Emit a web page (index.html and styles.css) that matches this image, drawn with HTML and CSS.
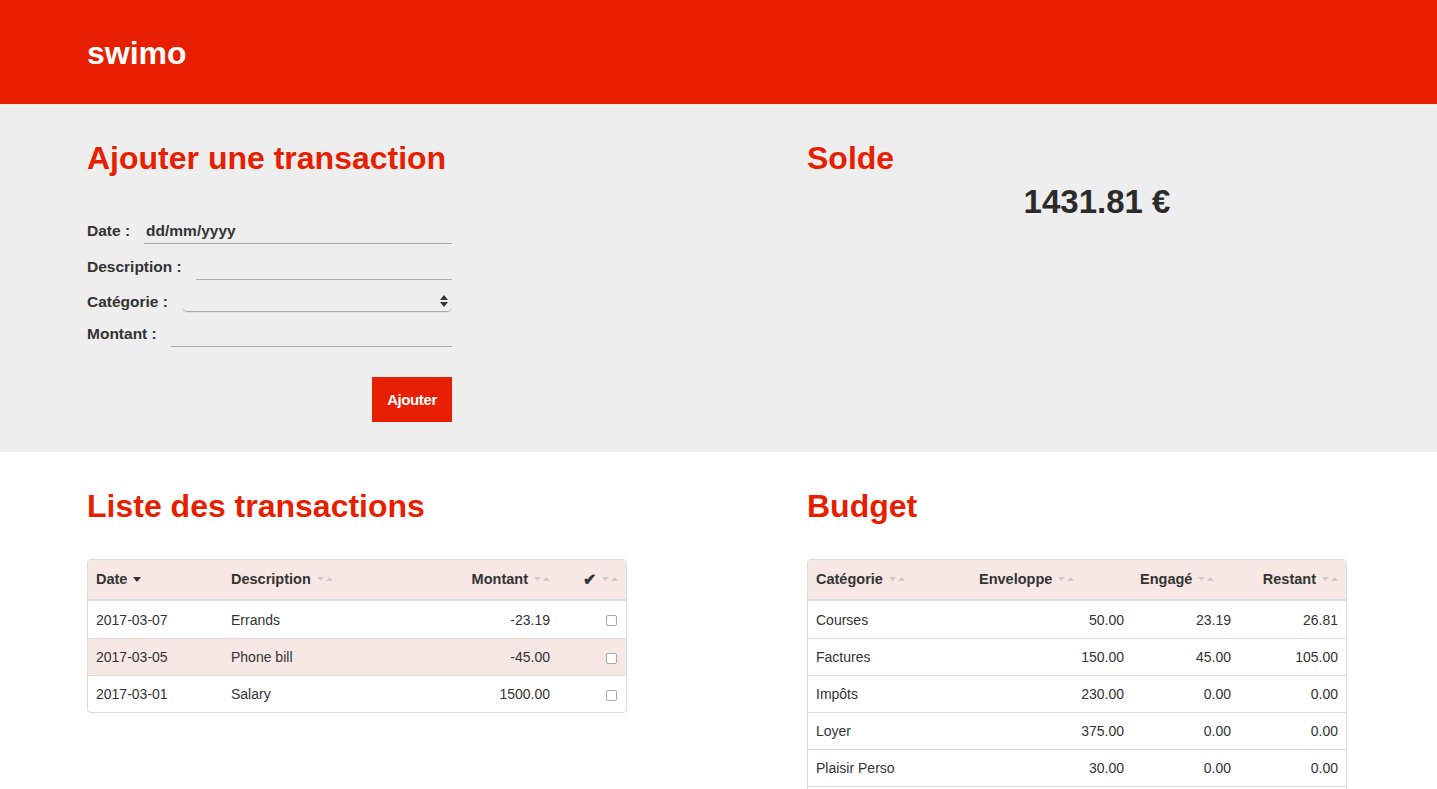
FILE: index.html
```html
<!DOCTYPE html>
<html lang="fr">
<head>
<meta charset="utf-8">
<title>swimo</title>
<link rel="stylesheet" href="styles.css">
</head>
<body>
<header class="topbar">
  <div class="wrap"><span class="brand">swimo</span></div>
</header>

<section class="panel panel-gray">
  <div class="wrap grid">
    <div class="col">
      <h2 class="title">Ajouter une transaction</h2>
      <form class="form">
        <div class="field f-date"><label>Date :</label><input class="line date" type="text" placeholder="dd/mm/yyyy"></div>
        <div class="field f-desc"><label>Description :</label><input class="line" type="text"></div>
        <div class="field f-cat"><label>Catégorie :</label>
          <div class="select-wrap">
            <select class="select"><option></option></select>
            <svg class="select-arrows" width="8" height="12" viewBox="0 0 8 12"><path d="M4 0 L8 5 H0 Z M0 7 H8 L4 12 Z" fill="#333"/></svg>
          </div>
        </div>
        <div class="field f-amt"><label>Montant :</label><input class="line" type="text"></div>
        <div class="actions"><button type="button" class="btn">Ajouter</button></div>
      </form>
    </div>
    <div class="col col-right">
      <h2 class="title">Solde</h2>
      <div class="balance">1431.81 €</div>
    </div>
  </div>
</section>

<section class="panel panel-white">
  <div class="wrap grid">
    <div class="col">
      <h2 class="title">Liste des transactions</h2>
      <table class="tbl tx">
        <thead>
          <tr>
            <th class="c-date">Date <svg class="caret" width="8" height="5" viewBox="0 0 8 5"><path d="M0 0 H8 L4 5 Z" fill="#333"/></svg></th>
            <th class="c-desc">Description <svg class="sort" width="16" height="6" viewBox="0 0 16 6"><path d="M0 1 H7 L3.5 5 Z M9 5 H16 L12.5 1 Z" fill="#cfcaca"/></svg></th>
            <th class="num">Montant <svg class="sort" width="16" height="6" viewBox="0 0 16 6"><path d="M0 1 H7 L3.5 5 Z M9 5 H16 L12.5 1 Z" fill="#cfcaca"/></svg></th>
            <th class="num c-chk">✔ <svg class="sort" width="16" height="6" viewBox="0 0 16 6"><path d="M0 1 H7 L3.5 5 Z M9 5 H16 L12.5 1 Z" fill="#cfcaca"/></svg></th>
          </tr>
        </thead>
        <tbody>
          <tr><td>2017-03-07</td><td>Errands</td><td class="num">-23.19</td><td class="num"><span class="box"></span></td></tr>
          <tr class="alt"><td>2017-03-05</td><td>Phone bill</td><td class="num">-45.00</td><td class="num"><span class="box"></span></td></tr>
          <tr><td>2017-03-01</td><td>Salary</td><td class="num">1500.00</td><td class="num"><span class="box"></span></td></tr>
        </tbody>
      </table>
    </div>
    <div class="col col-right">
      <h2 class="title">Budget</h2>
      <table class="tbl budget">
        <thead>
          <tr>
            <th class="b-cat">Catégorie <svg class="sort" width="16" height="6" viewBox="0 0 16 6"><path d="M0 1 H7 L3.5 5 Z M9 5 H16 L12.5 1 Z" fill="#cfcaca"/></svg></th>
            <th class="b-env">Enveloppe <svg class="sort" width="16" height="6" viewBox="0 0 16 6"><path d="M0 1 H7 L3.5 5 Z M9 5 H16 L12.5 1 Z" fill="#cfcaca"/></svg></th>
            <th class="b-eng">Engagé <svg class="sort" width="16" height="6" viewBox="0 0 16 6"><path d="M0 1 H7 L3.5 5 Z M9 5 H16 L12.5 1 Z" fill="#cfcaca"/></svg></th>
            <th class="b-res num">Restant <svg class="sort" width="16" height="6" viewBox="0 0 16 6"><path d="M0 1 H7 L3.5 5 Z M9 5 H16 L12.5 1 Z" fill="#cfcaca"/></svg></th>
          </tr>
        </thead>
        <tbody>
          <tr><td>Courses</td><td class="num">50.00</td><td class="num">23.19</td><td class="num">26.81</td></tr>
          <tr><td>Factures</td><td class="num">150.00</td><td class="num">45.00</td><td class="num">105.00</td></tr>
          <tr><td>Impôts</td><td class="num">230.00</td><td class="num">0.00</td><td class="num">0.00</td></tr>
          <tr><td>Loyer</td><td class="num">375.00</td><td class="num">0.00</td><td class="num">0.00</td></tr>
          <tr><td>Plaisir Perso</td><td class="num">30.00</td><td class="num">0.00</td><td class="num">0.00</td></tr>
          <tr><td>Transport</td><td class="num">60.00</td><td class="num">0.00</td><td class="num">0.00</td></tr>
        </tbody>
      </table>
    </div>
  </div>
</section>
</body>
</html>
```

FILE: styles.css
```css
* { box-sizing: border-box; }
html, body { margin: 0; padding: 0; }
body {
  font-family: "Liberation Sans", Arial, Helvetica, sans-serif;
  font-size: 14px;
  color: #333;
  background: #fff;
}
.wrap { padding-left: 87px; }

.topbar {
  background: #e81e00;
  height: 104px;
  display: flex;
  align-items: center;
}
.brand {
  color: #fff;
  font-weight: bold;
  font-size: 32px;
  letter-spacing: 0;
  position: relative;
  top: 1px;
}

.panel-gray { background: #eeeeee; padding: 34px 0 30px; }
.panel-white { padding: 34px 0 30px; }

.grid {
  display: grid;
  grid-template-columns: 720px 580px;
}

.title {
  margin: 0;
  color: #e81e00;
  font-size: 32px;
  line-height: 40px;
  font-weight: bold;
  letter-spacing: 0;
}

.form {
  width: 365px;
  margin-top: 35px;
  display: flex;
  flex-direction: column;
}
.field {
  display: flex;
  align-items: flex-end;
}
.f-date { height: 31px; }
.f-desc { height: 36px; }
.f-cat { height: 32px; }
.f-amt { height: 35px; }
.field label {
  font-weight: bold;
  font-size: 15.5px;
  padding-bottom: 4px;
  margin-right: 14px;
  white-space: nowrap;
}
.f-cat label { padding-bottom: 1px; }
.line {
  flex: 1;
  min-width: 0;
  border: 0;
  border-bottom: 1px solid #a9a9a9;
  background: transparent;
  height: 26px;
  padding: 0 2px;
  font: bold 15.5px "Liberation Sans", Arial, sans-serif;
  color: #333;
  outline: none;
}
.line.date::placeholder { color: #333; opacity: 1; }
.select-wrap {
  flex: 1;
  position: relative;
  height: 26px;
}
.select {
  -webkit-appearance: none;
  appearance: none;
  width: 100%;
  height: 100%;
  border: 0;
  border-bottom: 1px solid #a9a9a9;
  border-radius: 0 0 5px 5px;
  background: transparent;
  box-shadow: 0 1px 0 #e2e2e2;
}
.select-arrows {
  position: absolute;
  right: 4px;
  top: 9px;
  pointer-events: none;
}
.actions {
  display: flex;
  justify-content: flex-end;
  margin-top: 30px;
}
.btn {
  background: #e81e00;
  color: #fff;
  border: 0;
  border-radius: 0;
  width: 80px;
  height: 45px;
  font: bold 15px "Liberation Sans", Arial, sans-serif;
  letter-spacing: -0.4px;
  padding: 0;
}

.balance {
  text-align: center;
  font-size: 33px;
  font-weight: bold;
  margin-top: 5px;
  color: #2b2b2b;
}

.tbl {
  margin-top: 33px;
  width: 540px;
  border-collapse: separate;
  border-spacing: 0;
  border: 1px solid #dcdcdc;
  border-radius: 4px;
  font-size: 14px;
}
.tbl th {
  background: #f7e7e5;
  text-align: left;
  font-weight: bold;
  font-size: 14.5px;
  height: 41px;
  padding: 0 8px 1px;
  border-bottom: 2px solid #dcdcdc;
  white-space: nowrap;
}
.tbl th:first-child { border-top-left-radius: 4px; }
.tbl th:last-child { border-top-right-radius: 4px; }
.tbl td {
  height: 37px;
  padding: 0 8px;
  border-top: 1px solid #dcdcdc;
  white-space: nowrap;
}
.tbl tbody tr:first-child td { border-top: 0; }
.tbl tr.alt td { background: #f7e7e5; }
.tbl .num { text-align: right; }
.sort { margin-left: 2px; vertical-align: middle; position: relative; top: -1px; }
.caret { margin-left: 2px; vertical-align: middle; position: relative; top: -1px; }

.tx .c-date { width: 135px; }
.tx .c-chk { width: 68px; font-size: 16px; }
.tx .c-desc { width: 180px; }
.box {
  display: inline-block;
  width: 11px;
  height: 11px;
  border: 1px solid #a8a8a8;
  border-radius: 2px;
  background: #fff;
  vertical-align: middle;
  margin-right: 1px;
}

.budget .b-cat { width: 163px; }
.budget .b-env { width: 161px; }
.budget .b-eng { width: 107px; }
.budget .b-res { width: 107px; }
```
